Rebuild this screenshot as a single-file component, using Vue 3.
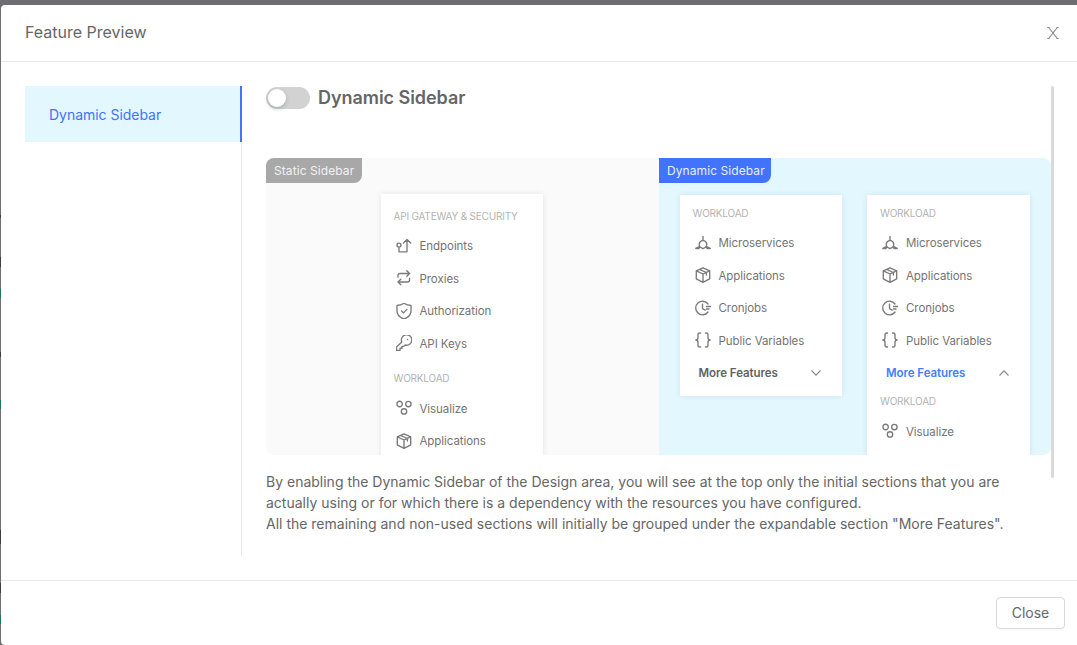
<script setup>
const staticGroups = [
  { title: 'API GATEWAY & SECURITY', items: [['endpoints', 'Endpoints'], ['proxies', 'Proxies'], ['shield', 'Authorization'], ['key', 'API Keys']] },
  { title: 'WORKLOAD', items: [['visualize', 'Visualize'], ['box', 'Applications']] },
]
const workload = [['micro', 'Microservices'], ['box', 'Applications'], ['clock', 'Cronjobs'], ['braces', 'Public Variables']]
const icons = {
  endpoints: 'M5 7.100a2 2 0 1 0-4 0a2 2 0 1 0 4 0M3 9.100v4.700h8V1.800M7.400 5l3.600-3.500L14.800 5',
  proxies: 'M2 7V5.500q0-2 2-2h9.500M10.800 .8l2.800 2.700l-2.800 2.700M13.500 8.500V10q0 2-2 2H2M4.800 9.300L2 12l2.800 2.700',
  shield: 'M8 .3c2.200 1.500 4.500 2.200 7 2.200V8c0 4.300-3.200 6.600-7 8C4.200 14.600 1 12.300 1 8V2.500C3.500 2.500 5.800 1.800 8 .3ZM5.600 8l1.900 1.900l3.300-3.500',
  key: 'M.5 15.500v-3.400L5.800 7A5.200 5.200 0 1 1 9.200 10L7.800 11.300H6v1.900H4v2.300ZM11.500 4.500h.1',
  visualize: 'M6.300 4a2.700 2.700 0 1 0-5.400 0a2.700 2.700 0 1 0 5.400 0M15.100 4a2.700 2.700 0 1 0-5.400 0a2.700 2.700 0 1 0 5.400 0M10.700 11.400a2.700 2.700 0 1 0-5.400 0a2.700 2.700 0 1 0 5.400 0',
  box: 'M8 .8l6.700 3v8L8 15.300l-6.700-3.500v-8ZM1.300 3.800L8 7l6.700-3.200M8 7v8.300M4.500 2.400L11.400 5.500V8',
  micro: 'M8 1.300v4M8 5.300q3.400 .6 3.800 3.600q0 1.800-1 3M8 5.300q-3.400 .6-3.800 3.600q0 1.800 1 3M.8 13.600h3L4.900 12l3.100 1.700l3.100-1.700l1.100 1.600h3M4.700 11.400L.8 13.400M11.300 11.400l3.900 2',
  clock: 'M13 4A6.800 6.800 0 1 0 13 12M7.500 4.200v4.500l2.700 1.400M11.500 6.500h4M11.500 9h2.500',
  braces: 'M5.500 1H4.700Q3 1 3 3v2.700Q3 8 .8 8Q3 8 3 10.300V13q0 2 1.700 2h.8M10.500 1h.8Q13 1 13 3v2.700Q13 8 15.200 8Q13 8 13 10.300V13q0 2-1.700 2h-.8',
}
</script>

<template>
  <div class="backdrop">
    <i class="peek p1"></i><i class="peek p2"></i><i class="peek p3"></i><i class="peek p4"></i><i class="peek p5"></i><i class="peek p6"></i><i class="peek p7"></i><i class="peek p8"></i>
    <section class="modal">
      <header class="header">
        <span>Feature Preview</span>
        <svg class="x" viewBox="0 0 12 12"><path d="M1.700 .5L10.300 11.500M10.300 .5L1.700 11.500M.3 .5h2.400M9.300 .5h2.400M.3 11.500h2.400M9.300 11.500h2.400" /></svg>
      </header>
      <main class="body">
        <nav class="nav"><div class="tab">Dynamic Sidebar</div></nav>
        <div class="content">
          <div class="title-row"><span class="switch"></span><h1>Dynamic Sidebar</h1></div>
          <div class="preview">
            <div class="pane static">
              <span class="tag">Static Sidebar</span>
              <div class="card">
                <template v-for="g in staticGroups" :key="g.title">
                  <div class="group">{{ g.title }}</div>
                  <div v-for="i in g.items" :key="i[1]" class="item">
                    <svg class="icon" viewBox="0 0 16 16"><path :d="icons[i[0]]" /></svg><span>{{ i[1] }}</span>
                  </div>
                </template>
              </div>
            </div>
            <div class="pane dynamic">
              <span class="tag">Dynamic Sidebar</span>
              <div v-for="open in [false, true]" :key="String(open)" class="card" :class="{ open }">
                <div class="group">WORKLOAD</div>
                <div v-for="i in workload" :key="i[1]" class="item">
                  <svg class="icon" viewBox="0 0 16 16"><path :d="icons[i[0]]" /></svg><span>{{ i[1] }}</span>
                </div>
                <div class="more">
                  <span>More Features</span>
                  <svg class="chev" viewBox="0 0 10 6"><path d="M.5 .5L5 5.200L9.500 .5" /></svg>
                </div>
                <template v-if="open">
                  <div class="group">WORKLOAD</div>
                  <div class="item"><svg class="icon" viewBox="0 0 16 16"><path :d="icons.visualize" /></svg><span>Visualize</span></div>
                </template>
              </div>
            </div>
          </div>
          <p class="desc">By enabling the Dynamic Sidebar of the Design area, you will see at the top only the initial sections that you are<br>actually using or for which there is a dependency with the resources you have configured.<br>All the remaining and non-used sections will initially be grouped under the expandable section "More Features".</p>
        </div>
        <div class="scrollbar"></div>
      </main>
      <footer class="footer"><button class="close">Close</button></footer>
    </section>
  </div>
</template>

<style>
body { overflow: hidden; }
</style>
<style scoped>
* { box-sizing: border-box; }
.backdrop { position: relative; width: 1077px; height: 645px; padding: 5px 0 0 1px; background: #6d6e70; font-family: Inter, "Liberation Sans", sans-serif; color: #666; overflow: hidden; }
.peek { position: absolute; left: 0; width: 1px; height: 8px; background: #3e3e40; }
.p1 { top: 215px; height: 3px; } .p2 { top: 257px; height: 10px; } .p3 { top: 289px; height: 9px; background: #177a5b; }
.p4 { top: 352px; height: 5px; } .p5 { top: 400px; height: 9px; background: #177a5b; } .p6 { top: 530px; height: 14px; }
.p7 { top: 583px; height: 10px; } .p8 { top: 615px; height: 9px; background: #177a5b; }
.modal { display: flex; flex-direction: column; height: 640px; background: #fff; border-radius: 4px 0 0 4px; }
.header { display: flex; justify-content: space-between; align-items: center; height: 57px; padding: 0 18px 2px 24px; border-bottom: 1px solid #e8e8e8; font-size: 16px; }
.x { width: 12px; height: 12px; margin-top: 2px; fill: none; stroke: #8c8c8c; stroke-width: 1.200; }
.body { display: flex; height: 518px; padding: 24px 0 24px 24px; }
.nav { width: 217px; height: 470px; border-right: 1px solid #e8e8e8; }
.tab { width: 217px; height: 56px; padding-left: 24px; line-height: 57px; font-size: 14px; letter-spacing: -.03px; color: #4173ff; background: #e3f7ff; border-right: 2px solid #4173ff; }
.content { width: 785px; margin-left: 24px; }
.title-row { display: flex; align-items: center; height: 24px; gap: 8px; }
.switch { width: 44px; height: 22px; border-radius: 11px; background: #d2d2d2; padding: 2px; }
.switch::before { content: ""; display: block; width: 18px; height: 18px; border-radius: 9px; background: #fff; box-shadow: 0 2px 4px rgba(0, 35, 11, .2); }
h1 { margin: 0; font-size: 18px; line-height: 24px; font-weight: 600; letter-spacing: -.05px; }
.preview { display: flex; height: 297px; margin-top: 48px; border-radius: 8px; overflow: hidden; font-size: 11.500px; letter-spacing: -.06px; color: #747474; }
.pane { position: relative; height: 297px; }
.static { width: 393px; padding: 36px 0 0 114.500px; background: #fafafa; }
.dynamic { display: flex; flex: 1; align-items: flex-start; gap: 25px; padding: 36.500px 0 0 20.500px; background: #e3f7ff; }
.tag { position: absolute; left: 0; top: 0; height: 24.500px; padding: 0 8px; line-height: 25px; font-size: 12px; letter-spacing: .08px; color: #f2f2f2; background: #a8a8a8; border-radius: 0 0 8px 0; white-space: nowrap; }
.static .tag { width: 96px; }
.dynamic .tag { width: 112px; background: #4173ff; color: #e8efff; }
.card { width: 162.500px; background: #fff; box-shadow: 0 0 6px rgba(0, 30, 60, .09); padding-top: 6px; }
.static .card { height: 300px; padding-top: 2.700px; }
.dynamic .card { height: 201px; }
.dynamic .card.open { height: 300px; }
.group { height: 26px; padding-left: 13px; line-height: 25px; font-size: 10px; letter-spacing: -.2px; color: #b3b3b3; white-space: nowrap; }
.static .group { height: 32.500px; padding-top: 6px; line-height: 27px; }
.item { display: flex; align-items: center; height: 32.500px; padding-left: 15px; gap: 8px; white-space: nowrap; }
.item span, .more span { padding-top: 1.200px; }
.icon { width: 16px; height: 16px; fill: none; stroke: #7a7a7a; stroke-width: 1.350; stroke-linejoin: round; stroke-linecap: round; }
.static .icon { margin-top: 1px; }
.more { display: flex; justify-content: space-between; align-items: center; height: 32.500px; padding: 0 21px 0 19px; font-weight: 600; color: #626262; }
.chev { width: 10px; height: 6px; fill: none; stroke: #888; stroke-width: 1.100; }
.open .more { color: #4080ff; }
.open .chev { transform: rotate(180deg); }
.desc { margin: 16px 0 0; font-size: 14px; line-height: 21px; white-space: nowrap; }
.scrollbar { width: 3px; height: 392px; background: #d9d9d9; border-radius: 2px; }
.footer { display: flex; justify-content: flex-end; height: 65px; padding: 16px 12px 0 0; border-top: 1px solid #e8e8e8; }
.close { width: 69px; height: 32px; padding: 0 0 2px; border: 1px solid #d9d9d9; border-radius: 4px; background: #fff; color: #666; font: 14px Inter, sans-serif; box-shadow: 0 2px 0 rgba(0, 0, 0, .015); }
</style>
